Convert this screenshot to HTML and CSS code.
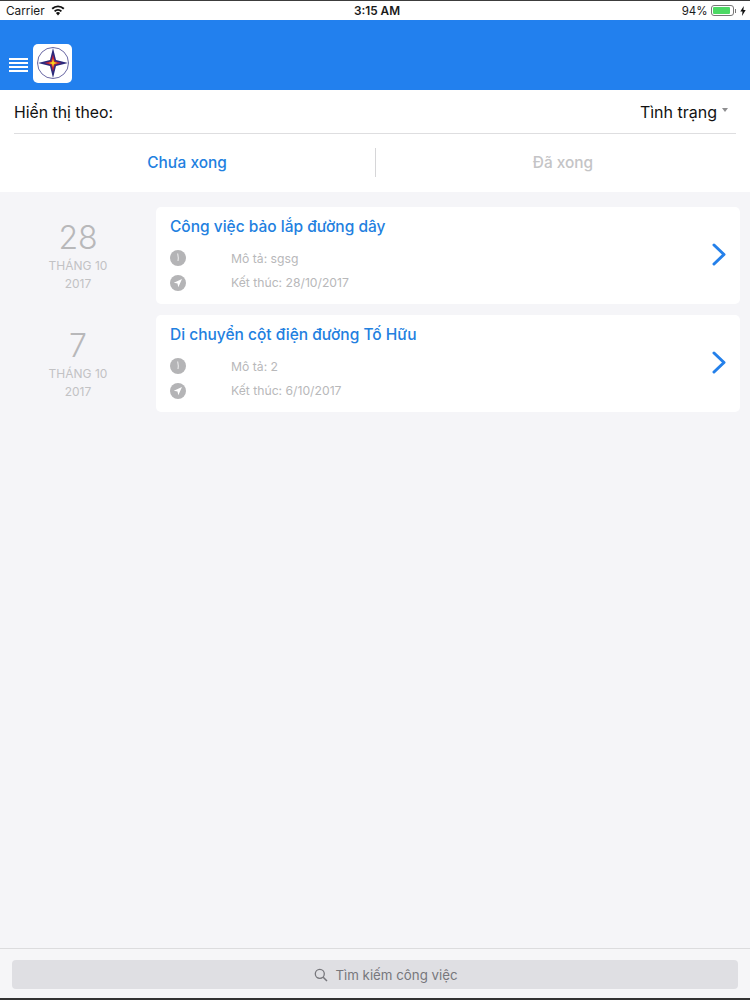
FILE: index.html
```html
<!DOCTYPE html>
<html lang="vi">
<head>
<meta charset="utf-8">
<title>Công việc</title>
<link rel="stylesheet" href="styles.css">
</head>
<body>
<div class="topline"></div>
<header class="status">
  <div class="status-left">Carrier
    <svg class="wifi" width="14" height="11" viewBox="0 0 14 11"><path d="M7 10.500 4.900 8a3 3 0 0 1 4.200 0Z" fill="#111"/><path d="M3.600 6.400a5 5 0 0 1 6.800 0M1.200 3.700a8.500 8.500 0 0 1 11.600 0" fill="none" stroke="#111" stroke-width="1.900"/></svg>
  </div>
  <div class="status-time">3:15 AM</div>
  <div class="status-right"><span class="pct">94%</span>
    <span class="battery"><span class="battery-fill"></span></span><span class="battery-tip"></span>
    <svg class="bolt" width="6" height="10" viewBox="0 0 6 10"><path d="M3.800 0 .3 5.600h2.200L2 10l3.700-6H3.400Z" fill="#111"/></svg>
  </div>
</header>
<nav class="navbar">
  <div class="menu"><i></i><i></i><i></i><i></i></div>
  <div class="logo">
    <svg width="34" height="34" viewBox="0 0 34 34">
      <circle cx="17" cy="17" r="15.500" fill="#fff" stroke="#6a68a4" stroke-width="1"/>
      <path d="M17 2 20 14 32 17 20 20 17 32 14 20 2 17 14 14Z" fill="#2c2a7c"/>
      <path d="M17 8.500 18.800 15.200 25.500 17 18.800 18.800 17 25.500 15.200 18.800 8.500 17 15.200 15.200Z" fill="#c4203c"/>
      <path d="M17 12.500 18 16 21.500 17 18 18 17 21.500 16 18 12.500 17 16 16Z" fill="#f6d21e"/>
    </svg>
  </div>
</nav>
<section class="filter">
  <div class="filter-row">
    <span>Hiển thị theo:</span>
    <span class="filter-value">Tình trạng<i class="caret"></i></span>
  </div>
  <div class="tabs">
    <div class="tab active">Chưa xong</div>
    <div class="tab">Đã xong</div>
  </div>
</section>
<main class="list">
  <article class="row">
    <div class="date"><div class="day">28</div><div class="month">THÁNG 10</div><div class="year">2017</div></div>
    <div class="card">
      <div class="card-body">
        <h2>Công việc bảo lắp đường dây</h2>
        <div class="meta"><svg class="ico" viewBox="0 0 16 16"><circle cx="8" cy="8" r="8" fill="#b4b4b6"/><path d="M7.700 3.500 8.300 8 8 11" fill="none" stroke="#fff" stroke-width=".8"/></svg><span>Mô tả: sgsg</span></div>
        <div class="meta"><svg class="ico" viewBox="0 0 16 16"><circle cx="8" cy="8" r="8" fill="#b4b4b6"/><path d="M12 4 3.800 7.700 7.500 8.500 8.300 12.200Z" fill="#fff"/></svg><span>Kết thúc: 28/10/2017</span></div>
      </div>
      <svg class="chev" width="15" height="23" viewBox="0 0 15 23"><path d="M2 2 12 11.500 2 21" fill="none" stroke="#2480ea" stroke-width="3" stroke-linecap="round" stroke-linejoin="round"/></svg>
    </div>
  </article>
  <article class="row">
    <div class="date"><div class="day">7</div><div class="month">THÁNG 10</div><div class="year">2017</div></div>
    <div class="card">
      <div class="card-body">
        <h2>Di chuyển cột điện đường Tố Hữu</h2>
        <div class="meta"><svg class="ico" viewBox="0 0 16 16"><circle cx="8" cy="8" r="8" fill="#b4b4b6"/><path d="M7.700 3.500 8.300 8 8 11" fill="none" stroke="#fff" stroke-width=".8"/></svg><span>Mô tả: 2</span></div>
        <div class="meta"><svg class="ico" viewBox="0 0 16 16"><circle cx="8" cy="8" r="8" fill="#b4b4b6"/><path d="M12 4 3.800 7.700 7.500 8.500 8.300 12.200Z" fill="#fff"/></svg><span>Kết thúc: 6/10/2017</span></div>
      </div>
      <svg class="chev" width="15" height="23" viewBox="0 0 15 23"><path d="M2 2 12 11.500 2 21" fill="none" stroke="#2480ea" stroke-width="3" stroke-linecap="round" stroke-linejoin="round"/></svg>
    </div>
  </article>
</main>
<footer class="searchbar">
  <div class="search">
    <svg width="14" height="14" viewBox="0 0 14 14"><circle cx="5.800" cy="5.800" r="4.500" fill="none" stroke="#77777c" stroke-width="1.300"/><path d="M9.200 9.200 13 13" stroke="#77777c" stroke-width="1.500"/></svg>
    <span>Tìm kiếm công việc</span>
  </div>
</footer>
<div class="bottomline"></div>
</body>
</html>
```

FILE: styles.css
```css
* { box-sizing: border-box; }
html, body { margin: 0; height: 1000px; overflow: hidden; }
body {
  width: 750px;
  display: flex;
  flex-direction: column;
  background: #f5f5f8;
  font-family: "Inter", "Liberation Sans", sans-serif;
  color: #111;
}
.topline { height: 1px; background: #3c3c3c; flex: none; }
.status {
  flex: none;
  height: 19px;
  background: #fff;
  display: grid;
  grid-template-columns: 1fr auto 1fr;
  align-items: center;
  padding: 0 4px 0 6px;
  font-size: 11.800px;
  color: #1a1a1a;
}
.status-left { display: flex; align-items: center; gap: 6px; }
.status-time { font-weight: 600; font-size: 11.800px; margin-left: 2px; }
.status-right { display: flex; align-items: center; justify-content: flex-end; }
.pct { font-size: 11.500px; margin-right: 3px; }
.battery {
  width: 23px; height: 11px; border: 1px solid #777; border-radius: 3px; padding: 1px; display: flex;
}
.battery-fill { width: 94%; background: #4cd964; border-radius: 1px; }
.battery-tip { width: 1.500px; height: 4px; background: #777; margin-left: 1px; }
.bolt { margin-left: 4px; }
.navbar {
  flex: none;
  height: 70px;
  background: #2280ee;
  display: flex;
  align-items: center;
  gap: 5px;
  padding: 16px 0 0 9px;
}
.menu { width: 19px; display: flex; flex-direction: column; gap: 2px; margin-top: 3px; }
.menu i { display: block; height: 2px; background: #fff; }
.logo {
  width: 39px; height: 39px; background: #fff; border-radius: 5px;
  display: flex; align-items: center; justify-content: center;
}
.filter { flex: none; background: #fff; height: 102px; padding: 0 14px; }
.filter-row {
  height: 44px;
  display: flex;
  justify-content: space-between;
  align-items: center;
  border-bottom: 1px solid #dedee0;
  font-size: 15.800px;
  padding-top: 1px;
}
.filter-value { display: flex; align-items: center; font-size: 16px; }
.caret {
  width: 0; height: 0; margin: 0 8px 4px 5px;
  border-left: 3.500px solid transparent; border-right: 3.500px solid transparent; border-top: 4px solid #8e8e90;
}
.tabs { display: flex; height: 57px; align-items: center; }
.tab { flex: 1; text-align: center; font-size: 15.400px; font-weight: 500; color: #c4c4c6; height: 29px; line-height: 29px; }
.tab.active { color: #2280e0; border-right: 1px solid #d6d6d8; padding-right: 15px; flex: 0 0 362px; }
.tab:last-child { padding-left: 14px; }
.list { flex: 1; padding: 15px 10px 0 0; display: flex; flex-direction: column; gap: 11px; }
.row { display: flex; height: 97px; }
.date { width: 156px; text-align: center; color: #c2c2c4; padding-top: 12px; }
.day { font-size: 32px; line-height: 38px; font-weight: 300; color: #b8b8ba; }
.month { font-size: 12px; line-height: 18px; }
.year { font-size: 12px; line-height: 17px; }
.card {
  flex: 1;
  background: #fff;
  border-radius: 5px;
  padding: 9px 13px 0 14px;
  display: flex;
  justify-content: space-between;
  align-items: center;
}
.card-body { align-self: flex-start; }
h2 { margin: 0 0 8px; font-size: 15.500px; font-weight: 500; line-height: 22px; color: #2280e0; }
.meta { display: flex; align-items: center; height: 24.500px; font-size: 12.200px; color: #b8b8ba; }
.ico { width: 16px; height: 16px; margin-right: 45px; }
.chev { margin-top: -12px; }
.searchbar { flex: none; height: 50px; padding: 11px 12px 0; background: #f6f6f8; border-top: 1px solid #dcdcde; }
.search {
  height: 29px; background: #dfdfe3; border-radius: 4px; padding-left: 22px;
  display: flex; align-items: center; justify-content: center; gap: 7px;
  font-size: 13.300px; color: #77777c;
}
.bottomline { height: 2px; flex: none; background: #333; }
```
